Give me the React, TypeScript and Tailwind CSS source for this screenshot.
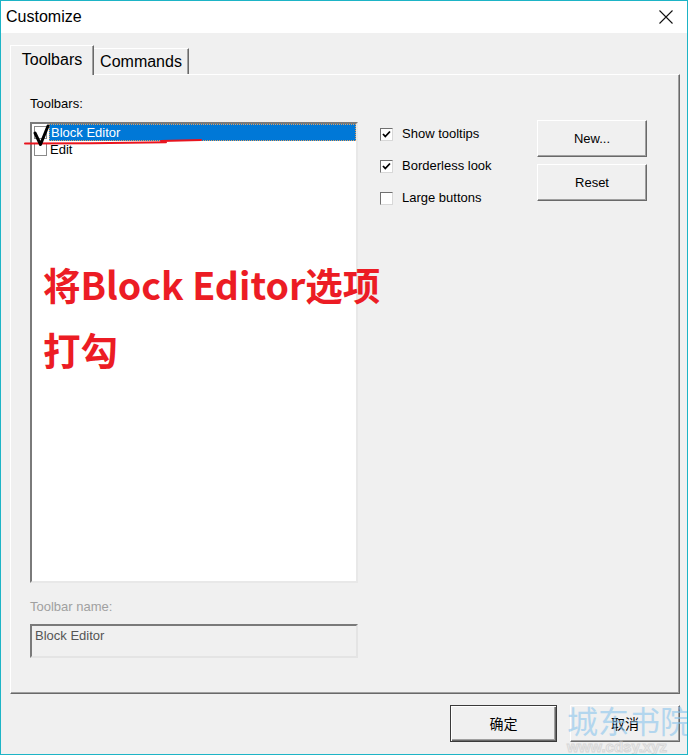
import React from "react";

const ui = { fontFamily: '"Liberation Sans", Arial, sans-serif' };
const cjk = { fontFamily: '"Noto Sans CJK SC", "Liberation Sans", sans-serif' };

function SmallCheck({ checked }: { checked: boolean }) {
  return (
    <div className="w-[13px] h-[13px] bg-white border border-t-[#707070] border-l-[#707070] border-r-[#d8d8d8] border-b-[#d8d8d8] flex items-center justify-center">
      {checked && (
        <svg width="9" height="9" viewBox="0 0 9 9">
          <path d="M1 4 L3.3 6.5 L8 1.5" stroke="#000" strokeWidth="1.8" fill="none" />
        </svg>
      )}
    </div>
  );
}

function ListCheck() {
  return <div className="w-[13px] h-[13px] bg-white border border-[#8a8a8a] shrink-0" />;
}

function Btn({ children, cls = "", def = false, style }: { children: React.ReactNode; cls?: string; def?: boolean; style?: React.CSSProperties }) {
  return (
    <div
      className={
        "flex items-center justify-center bg-[#f0f0f0] text-[13px] text-black " +
        (def
          ? "border border-[#3a3a3a] shadow-[inset_1px_1px_0_#fff,inset_-1px_-1px_0_#696969,inset_-2px_-2px_0_#a0a0a0] "
          : "border border-t-white border-l-white border-r-[#696969] border-b-[#696969] shadow-[inset_-1px_-1px_0_#a0a0a0] ") +
        cls
      }
      style={style}
    >
      {children}
    </div>
  );
}

export default function App() {
  return (
    <div className="relative w-[688px] h-[755px] overflow-hidden border border-[#1db4c6] bg-[#f0f0f0]" style={ui}>
      {/* Title bar */}
      <div className="h-[32px] bg-white flex items-center justify-between pl-[5px] pr-[14px]">
        <span className="text-[16px] text-black">Customize</span>
        <svg width="14" height="14" viewBox="0 0 14 14">
          <path d="M0.5 0.5 L13.5 13.5 M13.5 0.5 L0.5 13.5" stroke="#111" strokeWidth="1.1" />
        </svg>
      </div>

      {/* Body */}
      <div className="pl-[9px] pt-[12px]">
        {/* Tabs */}
        <div className="flex items-end h-[29px]">
          <div className="relative z-10 -mb-px h-[30px] w-[84px] bg-[#f0f0f0] border-t border-l border-white border-r border-r-[#696969] shadow-[inset_-1px_0_0_#a0a0a0] flex items-start justify-center pt-[2px] text-[16px] text-black">
            Toolbars
          </div>
          <div className="h-[26px] w-[95px] border-t border-white border-r border-r-[#696969] shadow-[inset_-1px_0_0_#a0a0a0] flex items-start justify-center pt-[1px] text-[16px] text-black">
            Commands
          </div>
        </div>

        {/* Panel */}
        <div className="w-[670px] h-[620px] border-t border-l border-white border-r border-b border-r-[#696969] border-b-[#696969] shadow-[inset_-1px_-1px_0_#a0a0a0] flex pl-[19px] pt-[21px]">
          {/* Left column */}
          <div className="w-[328px] flex flex-col">
            <div className="h-[16px] text-[13px] leading-[16px] text-black">Toolbars:</div>
            <div className="mt-[10px] h-[461px] bg-white border-2 border-t-[#7a7a7a] border-l-[#7a7a7a] border-r-[#e8e8e8] border-b-[#e8e8e8]">
              <div className="flex items-center h-[17px] pl-[2px]">
                <ListCheck />
                <div className="ml-[2px] flex-1 h-[17px] bg-[#0078d7] border border-dotted border-[#e0a060] text-white text-[13px] leading-[15px] pl-[1px]">
                  Block Editor
                </div>
              </div>
              <div className="flex items-center h-[16px] pl-[2px]">
                <ListCheck />
                <span className="ml-[3px] text-[13px] leading-[15px] text-black">Edit</span>
              </div>
            </div>
            <div className="mt-[16px] h-[16px] text-[13px] leading-[16px] text-[#a0a0a0]">Toolbar name:</div>
            <div className="mt-[9px] h-[34px] bg-[#f0f0f0] border-2 border-t-[#7a7a7a] border-l-[#7a7a7a] border-r-[#e4e4e4] border-b-[#e4e4e4] pl-[3px] pt-[2px] text-[13px] leading-[16px] text-[#555]">
              Block Editor
            </div>
          </div>

          {/* Checkbox column */}
          <div className="ml-[22px] w-[157px] flex flex-col gap-[16px] pt-[30px]">
            {[
              ["Show tooltips", true],
              ["Borderless look", true],
              ["Large buttons", false],
            ].map(([label, c]) => (
              <div key={label as string} className="flex items-center h-[16px]">
                <SmallCheck checked={c as boolean} />
                <span className="ml-[9px] text-[13px] text-black">{label as string}</span>
              </div>
            ))}
          </div>

          {/* Buttons column */}
          <div className="flex flex-col gap-[7px] pt-[24px]">
            <Btn cls="w-[110px] h-[37px]">New...</Btn>
            <Btn cls="w-[110px] h-[37px]">Reset</Btn>
          </div>
        </div>

        {/* Bottom buttons */}
        <div className="flex justify-end gap-[13px] pr-[7px] mt-[11px]">
          <Btn def cls="w-[107px] h-[37px] text-[14px]" style={cjk}>确定</Btn>
          <Btn cls="w-[110px] h-[37px] text-[14px]" style={cjk}>取消</Btn>
        </div>
      </div>

      {/* Annotations */}
      <svg className="absolute left-0 top-0 pointer-events-none" width="688" height="755">
        <path d="M24 142.5 L90 142.2 L165 141.2" stroke="#e8141e" strokeWidth="2" fill="none" strokeLinecap="round" />
        <path d="M160 140 L200 139" stroke="#e8141e" strokeWidth="2" fill="none" strokeLinecap="round" />
        <path d="M34 132 L39.5 143.5 L47 125" stroke="#000" strokeWidth="3" fill="none" strokeLinecap="round" strokeLinejoin="round" />
      </svg>

      <div className="absolute left-[42px] top-[250px] text-[#ec1c24] font-bold text-[37.5px] leading-[65px] pointer-events-none whitespace-nowrap" style={cjk}>
        <div>将Block Editor选项</div>
        <div>打勾</div>
      </div>

      {/* Watermark */}
      <div className="absolute left-[566px] top-[700px] pointer-events-none opacity-60" style={cjk}>
        <div className="text-[31px] leading-[38px] text-[#8cc6ee] whitespace-nowrap">城东书院</div>
        <div className="text-[15px] leading-[16px] text-transparent whitespace-nowrap font-bold" style={{ WebkitTextStroke: "1px #c8c8c8", fontFamily: '"Liberation Sans", sans-serif' }}>
          www.cdsy.xyz
        </div>
      </div>
    </div>
  );
}
